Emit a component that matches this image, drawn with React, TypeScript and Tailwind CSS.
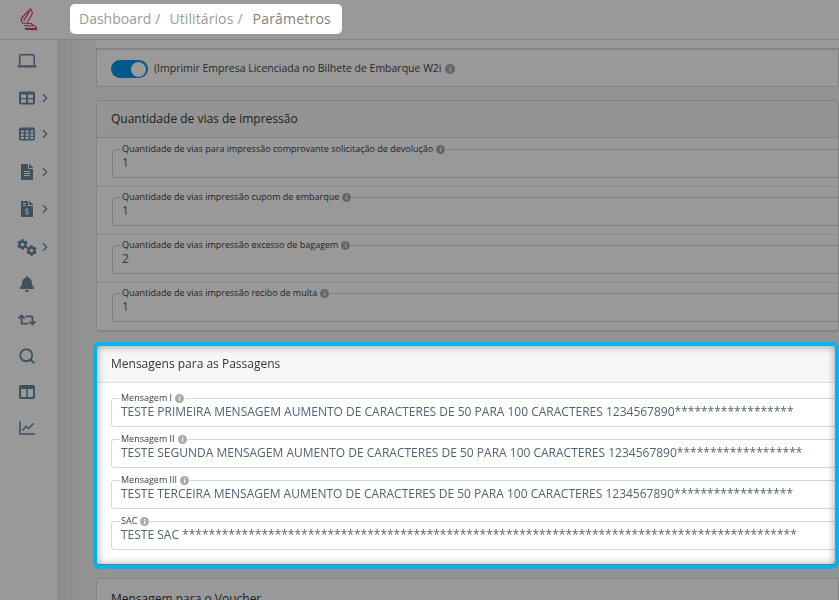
import React from "react";
import { FaFileAlt, FaFileInvoiceDollar, FaCog, FaBell, FaRetweet } from "react-icons/fa";
import { Search, ChevronRight } from "lucide-react";

function Info({ size = 9 }: { size?: number }) {
  return (
    <svg width={size} height={size} viewBox="0 0 9 9" className="inline-block shrink-0">
      <circle cx="4.5" cy="4.5" r="4.5" fill="#ababab" />
      <rect x="4" y="3.8" width="1.2" height="3" fill="#fff" />
      <rect x="4" y="2" width="1.2" height="1.1" fill="#fff" />
    </svg>
  );
}

function LaptopIcon() {
  return (
    <svg width="20" height="14" viewBox="0 0 20 14" fill="none">
      <path d="M2.8 11V2A1.2 1.2 0 0 1 4 0.8H16A1.2 1.2 0 0 1 17.2 2V11" stroke="#66889f" strokeWidth="1.5" />
      <path d="M0.5 11.2H19.5V12A1.5 1.5 0 0 1 18 13.5H2A1.5 1.5 0 0 1 0.5 12Z" fill="#66889f" />
    </svg>
  );
}

function TableIcon() {
  return (
    <svg width="16" height="14" viewBox="0 0 16 14">
      <rect width="16" height="13" rx="2" y="0.5" fill="#66889f" />
      <rect x="2" y="3.5" width="5" height="3.5" fill="#fff" />
      <rect x="9" y="3.5" width="5" height="3.5" fill="#fff" />
      <rect x="2" y="8.2" width="5" height="3.5" fill="#fff" />
      <rect x="9" y="8.2" width="5" height="3.5" fill="#fff" />
    </svg>
  );
}

function GridIcon() {
  const cells: React.ReactNode[] = [];
  [3.4, 6.6, 9.8].forEach((y) =>
    [1.8, 6.6, 11.4].forEach((x) =>
      cells.push(<rect key={`${x}-${y}`} x={x} y={y} width="3" height="2.2" fill="#fff" />)
    )
  );
  return (
    <svg width="16" height="14" viewBox="0 0 16 14">
      <rect width="16" height="13" rx="2" y="0.5" fill="#66889f" />
      {cells}
    </svg>
  );
}

function ColumnsIcon() {
  return (
    <svg width="16" height="14" viewBox="0 0 16 14">
      <rect width="16" height="14" rx="2" fill="#66889f" />
      <rect x="2" y="4" width="5.2" height="8" fill="#fff" />
      <rect x="8.8" y="4" width="5.2" height="8" fill="#fff" />
    </svg>
  );
}

function ChartIcon() {
  return (
    <svg width="16" height="14" viewBox="0 0 16 14" fill="none" stroke="#66889f" strokeWidth="1.6">
      <path d="M1 0.5V13H16" />
      <path d="M3.5 9.5L7 5.5L9.5 7.5L14.5 2.5" />
    </svg>
  );
}

function GearsIcon() {
  return (
    <div className="flex h-[17px] w-[20px]">
      <FaCog size={11} color="#66889f" />
      <FaCog size={11} color="#66889f" className="-ml-[2px] mt-[6px]" />
    </div>
  );
}

function Logo() {
  return (
    <svg width="18" height="23" viewBox="0 0 18 23" fill="none" stroke="#e0307f" strokeWidth="1.2">
      <path d="M1.5 14C0.8 12 1.2 10.5 2.5 9L10.5 1L12.5 4.5C12 7 9.5 11 7 14.5" />
      <path d="M3.5 13L9.5 3.5" />
      <path d="M1.5 15L11 15.5L17 20" />
      <path d="M4 17.5L13 18" />
      <path d="M5 20.8L17 21.3" stroke="#c0307f" strokeWidth="2" />
    </svg>
  );
}

const side = [
  { icon: <LaptopIcon />, chev: false, mb: "mb-[17px]" },
  { icon: <TableIcon />, chev: true, mb: "mb-[16px]" },
  { icon: <GridIcon />, chev: true, mb: "mb-[18px]" },
  { icon: <FaFileAlt size={16} color="#66889f" />, chev: true, mb: "mb-[17px]" },
  { icon: <FaFileInvoiceDollar size={16} color="#66889f" />, chev: true, mb: "mb-[18px]" },
  { icon: <GearsIcon />, chev: true, mb: "mb-[17px]" },
  { icon: <FaBell size={16} color="#66889f" />, chev: false, mb: "mb-[16px]" },
  { icon: <FaRetweet size={18} color="#66889f" />, chev: false, mb: "mb-[16px]" },
  { icon: <Search size={18} color="#66889f" strokeWidth={2.4} />, chev: false, mb: "mb-[16px]" },
  { icon: <ColumnsIcon />, chev: false, mb: "mb-[16px]" },
  { icon: <ChartIcon />, chev: false, mb: "" },
];

function Field({ label, value }: { label: string; value: string }) {
  return (
    <fieldset className="-mr-[20px] h-[35px] rounded-[3px] border border-[#d2d6de] pl-[9px]">
      <legend className="-ml-[1px] flex h-[12px] items-center gap-[3px] px-[1px] text-[9px] leading-[12px] text-[#3a3a3a]">
        {label} <Info />
      </legend>
      <div className="whitespace-nowrap text-[12px] leading-[16px] text-[#526273]">{value}</div>
    </fieldset>
  );
}

const vias = [
  ["Quantidade de vias para impressão comprovante solicitação de devolução", "1"],
  ["Quantidade de vias impressão cupom de embarque", "1"],
  ["Quantidade de vias impressão excesso de bagagem", "2"],
  ["Quantidade de vias impressão recibo de multa", "1"],
];

const msgs = [
  ["Mensagem I", "TESTE PRIMEIRA MENSAGEM AUMENTO DE CARACTERES DE 50 PARA 100 CARACTERES 1234567890******************"],
  ["Mensagem II", "TESTE SEGUNDA MENSAGEM AUMENTO DE CARACTERES DE 50 PARA 100 CARACTERES 1234567890*******************"],
  ["Mensagem III", "TESTE TERCEIRA MENSAGEM AUMENTO DE CARACTERES DE 50 PARA 100 CARACTERES 1234567890******************"],
  ["SAC", "TESTE SAC *********************************************************************************************"],
];

export default function App() {
  return (
    <div className="relative flex h-[600px] w-[839px] flex-col overflow-hidden bg-white font-['Open_Sans',sans-serif]">
      <div className="fixed inset-0 z-10 bg-black/40" />

      <header className="flex h-[40px] shrink-0 items-center border-b border-[#dddddd] bg-white">
        <div className="flex w-[57px] shrink-0 justify-center">
          <Logo />
        </div>
        <div className="relative z-20 ml-[13px] mt-[-1px] flex h-[30px] w-[272px] items-center rounded-[5px] bg-white pb-[1px] pl-[9px] text-[14px] text-[#9a9a9a]">
          <span>Dashboard</span>
          <span className="ml-[4px]">/</span>
          <span className="ml-[9px] tracking-[0.1px]">Utilitários</span>
          <span className="ml-[4px]">/</span>
          <span className="ml-[10px] tracking-[0.2px] text-[#808080]">Parâmetros</span>
        </div>
      </header>

      <div className="flex min-h-0 flex-1">
        <aside className="flex w-[57px] shrink-0 flex-col bg-white pt-[11px]">
          {side.map((s, i) => (
            <div key={i} className={`flex h-[20px] shrink-0 items-center ${s.mb}`}>
              <div className="flex w-[53px] shrink-0 items-center justify-center">{s.icon}</div>
              {s.chev && <ChevronRight size={14} color="#66889f" className="-ml-[15px]" />}
            </div>
          ))}
        </aside>
        <div className="w-[23px] shrink-0 bg-gradient-to-r from-[#ebebee] to-[#f1f1f1]" />
        <main className="min-w-0 flex-1 overflow-hidden bg-[#f5f5f5] pl-[16px]">
          <div className="h-[10px] border-b-2 border-[#dddddd] bg-white" />
          <div className="flex h-[37px] items-center rounded-b-[3px] border border-t-0 border-[#dcdcdc] bg-white pl-[14px] pt-[2px]">
            <div className="flex h-[18px] w-[37px] items-center justify-end rounded-full bg-[#0091e6] pr-[2px]">
              <div className="h-[15px] w-[15px] rounded-full bg-white" />
            </div>
            <span className="ml-[6px] mr-[3px] text-[10.5px] text-[#444444]">(Imprimir Empresa Licenciada no Bilhete de Embarque W2i</span>
            <Info size={10} />
          </div>

          <section className="mt-[13px] rounded-[3px] border-x border-b-2 border-t border-[#dcdcdc] bg-white">
            <div className="flex h-[37px] items-center border-b border-[#dddddd] bg-[#f7f7f7] pl-[14px] text-[12px] text-[#333333]">
              Quantidade de vias de impressão
            </div>
            {vias.map(([l, v], i) => (
              <div key={l} className={`pb-[8px] pl-[15px] ${i > 0 ? "border-t border-[#e4e4e4] pt-[4px]" : "pt-[5px]"}`}>
                <Field label={l} value={v} />
              </div>
            ))}
          </section>

          <section className="relative z-20 mt-[14px] h-[218px] w-[739px] rounded-[3px] bg-white">
            <div className="h-full overflow-hidden">
              <div className="flex h-[37px] items-center border-b border-[#dddddd] bg-[#f7f7f7] pl-[15px] text-[12px] text-[#333333]">
                Mensagens para as Passagens
              </div>
              <div className="flex flex-col gap-[6px] pl-[15px] pt-[9px]">
                {msgs.map(([l, v]) => (
                  <Field key={l} label={l} value={v} />
                ))}
              </div>
            </div>
            <div className="pointer-events-none absolute -bottom-[5px] -left-[3px] -right-[4px] -top-[4px] rounded-[7px] border-4 border-[#00b5ef] shadow-[inset_0_0_8px_rgba(0,0,0,0.4)]" />
          </section>

          <section className="mt-[14px] rounded-t-[3px] border border-[#dcdcdc] bg-white">
            <div className="flex h-[40px] items-center pl-[14px] text-[12px] text-[#333333]">Mensagem para o Voucher</div>
          </section>
        </main>
      </div>
    </div>
  );
}
